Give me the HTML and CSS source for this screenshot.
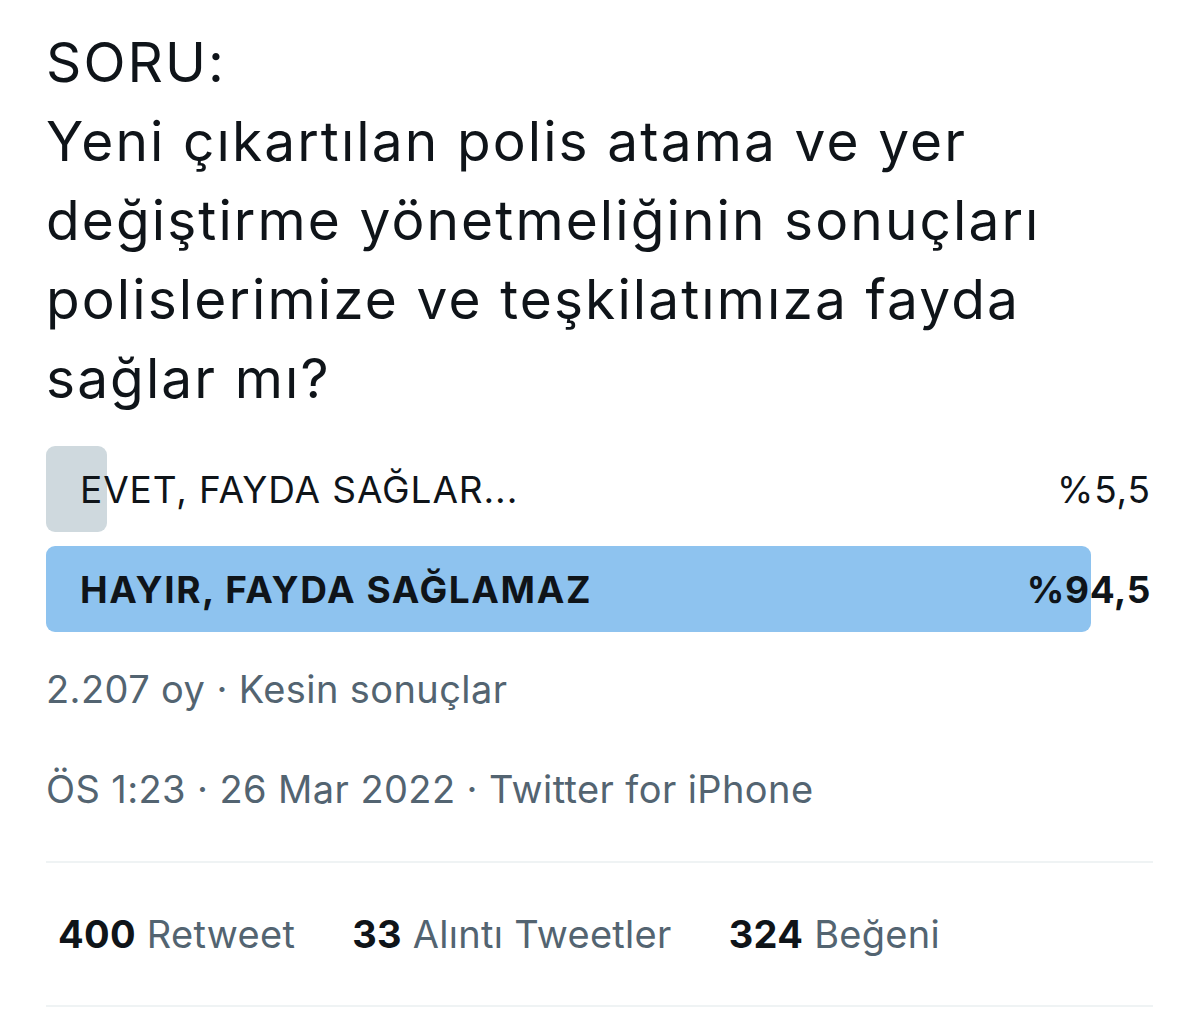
FILE: index.html
```html
<!DOCTYPE html>
<html lang="tr">
<head>
<meta charset="utf-8">
<link rel="stylesheet" href="styles.css">
</head>
<body>
<main class="tweet">
  <h1 class="question">SORU:<br>Yeni çıkartılan polis atama ve yer<br>değiştirme yönetmeliğinin sonuçları<br>polislerimize ve teşkilatımıza fayda<br>sağlar mı?</h1>
  <section class="poll">
    <div class="option">
      <div class="fill fill-gray" style="width:61px"></div>
      <span class="label">EVET, FAYDA SAĞLAR...</span>
      <span class="pct">%5,5</span>
    </div>
    <div class="option winner">
      <div class="fill fill-blue" style="width:1045px"></div>
      <span class="label">HAYIR, FAYDA SAĞLAMAZ</span>
      <span class="pct">%94,5</span>
    </div>
  </section>
  <p class="meta votes">2.207 oy · Kesin sonuçlar</p>
  <p class="meta time">ÖS 1:23 · 26 Mar 2022 · Twitter for iPhone</p>
  <div class="stats">
    <span class="stat"><b>400</b> Retweet</span>
    <span class="stat"><b>33</b> Alıntı Tweetler</span>
    <span class="stat"><b>324</b> Beğeni</span>
  </div>
</main>
</body>
</html>
```
FILE: styles.css
```css
* { box-sizing: border-box; }
html, body { margin: 0; padding: 0; background: #ffffff; }
body {
  font-family: Inter, "Noto Sans", "Liberation Sans", Arial, sans-serif;
  color: #0f1419;
}
.tweet {
  width: 1200px;
  height: 1009px;
  padding: 23px 47px 0 46px;
  overflow: hidden;
}
.question {
  margin: 0;
  font-size: 55px;
  font-weight: 400;
  line-height: 79px;
  letter-spacing: 2.1px;
  white-space: nowrap;
}
.poll {
  margin-top: 28px;
  display: flex;
  flex-direction: column;
  gap: 14px;
}
.option {
  position: relative;
  height: 86px;
  display: flex;
  align-items: center;
  justify-content: space-between;
  padding: 0 2px 0 34px;
  font-size: 37px;
  letter-spacing: 0.9px;
}
.fill {
  position: absolute;
  left: 0;
  top: 0;
  bottom: 0;
  border-radius: 9px;
}
.fill-gray { background: #cfd9de; }
.fill-blue { background: #8ec3ef; }
.label, .pct { position: relative; }
.winner { font-weight: 700; letter-spacing: 1.6px; }
.winner .pct { letter-spacing: 0.6px; }
.meta {
  margin: 0;
  font-size: 38px;
  line-height: 46px;
  letter-spacing: 0.4px;
  color: #536471;
}
.votes { margin-top: 34px; }
.time { margin-top: 54px; }
.stats {
  margin-top: 49px;
  border-top: 2px solid #eff3f4;
  border-bottom: 2px solid #eff3f4;
  height: 146px;
  display: flex;
  align-items: center;
  gap: 57px;
  padding-left: 12px;
  font-size: 38px;
  letter-spacing: 0.3px;
  color: #536471;
}
.stat b { color: #0f1419; font-weight: 700; }
```
